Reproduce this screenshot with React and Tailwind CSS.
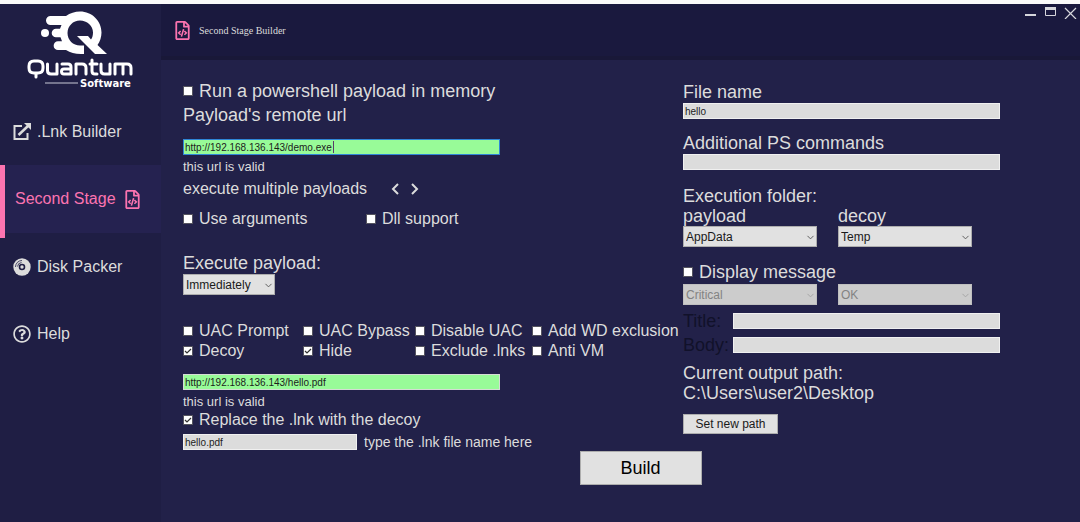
import { useState } from 'react';
import { ChevronDown } from 'lucide-react';
import { FaRegFileCode, FaRegQuestionCircle } from 'react-icons/fa';

function Logo() {
  return (
    <div className="flex flex-col items-center h-[94px] pt-[7px]">
      <svg width="110" height="80" viewBox="26 11 110 80" fill="none" className="overflow-visible">
        <g fill="#fff">
          <path
            fillRule="evenodd"
            d="M50.500 16H66C70 13 75 11.500 80 11.500C92 11.500 101.500 21 101.500 32.500C101.500 37 100 41.500 97.500 45L107 54H95L77 36H88L91 39.500C92.500 37.500 93 35 93 32.500C93 25.500 87 20.500 80 20.500C73 20.500 67.500 26 67.500 33C67.500 40 73 45.500 80 45.500H84V54C76 54.500 71 53 66 50H58A4.300 4.300 0 0 1 58 41.300H62L60.500 37.300H56A4.300 4.300 0 0 1 56 28.700H60L61.500 25H50.500A4.500 4.500 0 0 1 50.500 16Z"
          />
          <circle cx="45" cy="33" r="4" />
        </g>
        <g stroke="#fff" strokeWidth="3" strokeLinecap="round" strokeLinejoin="round">
          <path d="M34 61H38Q43 61 43 66V68Q43 73 38 73H34Q29 73 29 68V66Q29 61 34 61ZM36 73V77" />
          <path d="M47.500 64V70.500Q47.500 74 51 74H57V64" />
          <path d="M62 64H68Q71 64 71 67V74H64Q61.500 74 61.500 71.500Q61.500 69 64 69H71" />
          <path d="M76 74V64H82Q86 64 86 68V74" />
          <path d="M92 60V71Q92 74 95 74H97M90 64H97" />
          <path d="M101 64V70.500Q101 74 104.500 74H110V64" />
          <path d="M115 74V64H127Q131 64 131 68V74M123 64V74" />
        </g>
        <path d="M45 83H78" stroke="#c9c9d6" />
        <text x="80" y="87" fill="#fff" fontFamily="DejaVu Sans" fontWeight="700" fontSize="10">
          Software
        </text>
      </svg>
    </div>
  );
}

function LinkIcon() {
  return (
    <svg width="18" height="18" viewBox="0 0 18 18" fill="none" stroke="#dcdcdc" strokeWidth="2">
      <path d="M9 3H1.500V16H14.500V10" />
      <path d="M5.500 12L15 3" strokeWidth="2.500" />
      <path d="M11 0H18V7Z" fill="#dcdcdc" stroke="none" />
    </svg>
  );
}

function DiskIcon() {
  return (
    <svg width="18" height="18" viewBox="0 0 18 18" fill="none">
      <circle cx="9" cy="9" r="8.700" fill="#dcdcdc" />
      <circle cx="9" cy="9" r="2.500" stroke="#1f1e44" strokeWidth="1.600" />
      <path d="M2.500 9A6.500 6.500 0 0 1 9 2.500M4.500 8.500A4.500 4.500 0 0 1 8.500 4.500" stroke="#1f1e44" strokeWidth="0.800" />
    </svg>
  );
}

function NavItem({ icon, children }) {
  return (
    <button type="button" className="flex items-center gap-[6px] h-[67px] w-full pl-[13px] text-base text-[#dcdcdc]">
      {icon}
      {children}
    </button>
  );
}

function Checkbox({ label, checked = false, large = false }) {
  const [on, setOn] = useState(checked);
  return (
    <label
      className={
        large
          ? 'flex items-center gap-[6px] text-lg leading-[22px] whitespace-nowrap'
          : 'flex items-center gap-[6px] text-base leading-5 whitespace-nowrap'
      }
    >
      <span className="relative flex shrink-0">
        <input
          type="checkbox"
          checked={on}
          onChange={() => setOn(!on)}
          className="peer appearance-none size-[10px] bg-white border border-[#55545f]"
        />
        <svg
          viewBox="0 0 10 10"
          fill="none"
          stroke="#333"
          strokeWidth="1.200"
          className="absolute inset-0 size-[10px] hidden peer-checked:block pointer-events-none"
        >
          <path d="M2 5L4 7L8 3" />
        </svg>
      </span>
      {label}
    </label>
  );
}

function TextInput({ className = '', ...props }) {
  return (
    <input
      type="text"
      className={`block h-4 px-px text-[10px] leading-3 text-[#1c1c1c] border outline-none ${className}`}
      {...props}
    />
  );
}

function Select({ id, label, options, disabled, className = '' }) {
  return (
    <div className={`relative ${className}`}>
      <select
        id={id}
        aria-label={label}
        disabled={disabled}
        className="appearance-none block w-full h-[21px] pl-[2px] pr-4 text-xs leading-4 text-[#1a1a1a] bg-[#e1e1e1] border border-[#adadad] disabled:bg-[#cccccc] disabled:border-[#bfbfbf] disabled:text-[#838383] disabled:opacity-100"
      >
        {options.map((o) => (
          <option key={o}>{o}</option>
        ))}
      </select>
      <ChevronDown
        size={11}
        strokeWidth={2}
        className={`absolute right-[1px] top-[6px] pointer-events-none ${disabled ? 'text-[#a3a3a3]' : 'text-[#555555]'}`}
      />
    </div>
  );
}

function WindowControls() {
  return (
    <div className="flex items-start gap-[7px] pt-[2px] pr-[3px] text-[#d6d6dc]">
      <button type="button" aria-label="Minimize" className="size-[13px]">
        <svg width="13" height="13" viewBox="0 0 13 13" stroke="currentColor" strokeWidth="2">
          <path d="M1 9H12" />
        </svg>
      </button>
      <button type="button" aria-label="Maximize" className="size-[13px]">
        <svg width="13" height="13" viewBox="0 0 13 13" fill="none" stroke="currentColor">
          <path d="M1.500 1V9.500H11.500V1" />
          <path d="M1 2.500H12" strokeWidth="3" />
        </svg>
      </button>
      <button type="button" aria-label="Close" className="size-[13px]">
        <svg width="13" height="13" viewBox="0 0 13 13" stroke="currentColor" strokeWidth="1.200">
          <path d="M1 2L12 13M12 2L1 13" />
        </svg>
      </button>
    </div>
  );
}

function PayloadColumn() {
  const [url, setUrl] = useState('http://192.168.136.143/demo.exe');
  const [decoyUrl, setDecoyUrl] = useState('http://192.168.136.143/hello.pdf');
  const [lnkName, setLnkName] = useState('hello.pdf');

  return (
    <section>
      <Checkbox large label="Run a powershell payload in memory" />
      <label htmlFor="url" className="block mt-[2px] text-lg leading-[22px]">
        Payload's remote url
      </label>
      <div className="relative mt-[13px]">
        <TextInput
          id="url"
          value={url}
          onChange={(e) => setUrl(e.target.value)}
          className="w-[317px] max-w-full bg-[#98fb98] border-[#2f86d6]"
        />
        {/* text cursor */}
        <span className="absolute left-[150px] top-[2px] w-px h-3 bg-[#5a3a6a] pointer-events-none" />
      </div>
      <p className="mt-1 text-[13px] leading-4">this url is valid</p>

      <div className="flex items-center mt-1 text-base leading-5">
        execute multiple payloads
        <button type="button" aria-label="Previous payload" className="ml-6">
          <svg width="10" height="12" viewBox="0 0 10 12" fill="none" stroke="currentColor" strokeWidth="2">
            <path d="M7 1L2 6L7 11" />
          </svg>
        </button>
        <button type="button" aria-label="Next payload" className="ml-[10px]">
          <svg width="10" height="12" viewBox="0 0 10 12" fill="none" stroke="currentColor" strokeWidth="2">
            <path d="M1 1L6 6L1 11" />
          </svg>
        </button>
      </div>

      <div className="grid grid-cols-[183px_auto] mt-[10px]">
        <Checkbox label="Use arguments" />
        <Checkbox label="Dll support" />
      </div>

      <label htmlFor="when" className="block mt-[23px] text-lg leading-[22px]">
        Execute payload:
      </label>
      <Select id="when" options={['Immediately', 'After reboot']} className="w-[92px]" />

      <div className="grid grid-cols-[120px_112px_117px_auto] mt-[26px]">
        <Checkbox label="UAC Prompt" />
        <Checkbox label="UAC Bypass" />
        <Checkbox label="Disable UAC" />
        <Checkbox label="Add WD exclusion" />
        <Checkbox label="Decoy" checked />
        <Checkbox label="Hide" checked />
        <Checkbox label="Exclude .lnks" />
        <Checkbox label="Anti VM" />
      </div>

      <TextInput
        aria-label="Decoy url"
        value={decoyUrl}
        onChange={(e) => setDecoyUrl(e.target.value)}
        className="mt-[13px] w-[317px] max-w-full bg-[#98fb98] border-[#d5dcd5]"
      />
      <p className="mt-1 text-[13px] leading-4">this url is valid</p>
      <Checkbox label="Replace the .lnk with the decoy" checked />
      <div className="flex items-center gap-[7px] h-4 mt-1">
        <TextInput
          id="lnk"
          value={lnkName}
          onChange={(e) => setLnkName(e.target.value)}
          className="w-[174px] bg-[#dcdcdc] border-[#f0f0f0]"
        />
        <label htmlFor="lnk" className="text-sm">
          type the .lnk file name here
        </label>
      </div>
    </section>
  );
}

function OutputColumn() {
  return (
    <section className="pt-px pr-5">
      <div className="max-w-[317px]">
        <label htmlFor="file" className="block text-lg leading-[22px]">
          File name
        </label>
        <TextInput id="file" defaultValue="hello" className="w-full bg-[#dcdcdc] border-[#f0f0f0]" />

        <label htmlFor="commands" className="block mt-[13px] text-lg leading-[22px]">
          Additional PS commands
        </label>
        <TextInput id="commands" className="w-full bg-[#dcdcdc] border-[#f0f0f0]" />

        <p className="mt-4 text-lg leading-5">Execution folder:</p>
        <div className="grid grid-cols-[134px_134px] gap-x-[21px]">
          <label htmlFor="payload-dir" className="text-lg leading-5">
            payload
          </label>
          <label htmlFor="decoy-dir" className="text-lg leading-5">
            decoy
          </label>
          <Select id="payload-dir" options={['AppData', 'Temp']} />
          <Select id="decoy-dir" options={['Temp', 'AppData']} />
        </div>

        <div className="mt-[14px]">
          <Checkbox large label="Display message" />
        </div>
        <div className="grid grid-cols-[134px_134px] gap-x-[21px] mt-px">
          <Select label="Message icon" options={['Critical']} disabled />
          <Select label="Message buttons" options={['OK']} disabled />
        </div>

        <div className="grid grid-cols-[50px_1fr] gap-y-2 mt-2 text-lg leading-4">
          <label htmlFor="title" className="text-[#11112a]">
            Title:
          </label>
          <TextInput id="title" className="bg-[#dcdcdc] border-[#f0f0f0]" />
          <label htmlFor="body" className="text-[#11112a]">
            Body:
          </label>
          <TextInput id="body" className="bg-[#dcdcdc] border-[#f0f0f0]" />
        </div>

        <p className="mt-[10px] text-lg leading-5">
          Current output path:
          <br />
          C:\Users\user2\Desktop
        </p>
        <button
          type="button"
          className="block w-[95px] h-5 mt-[11px] bg-[#e1e1e1] border border-[#adadad] text-xs text-[#1a1a1a]"
        >
          Set new path
        </button>
      </div>
    </section>
  );
}

export default function App() {
  return (
    <div className="min-h-screen flex flex-col bg-[#222149] border-t-4 border-[#fafafa] font-['Liberation_Sans',Arial,sans-serif] text-[#dcdcdc]">
      <div className="flex flex-1">
        <aside className="w-[161px] shrink-0 bg-[#1f1e44]">
          <Logo />
          <nav>
            <NavItem icon={<LinkIcon />}>.Lnk Builder</NavItem>
            <div className="relative">
              <button
                type="button"
                className="flex items-center w-full h-[68px] pl-[15px] gap-[7px] bg-[#252250] text-base text-[#fc74b0]"
              >
                Second Stage
                <FaRegFileCode size={19} />
              </button>
              <span className="absolute left-0 top-0 w-[5px] h-[73px] bg-[#fc74b0]" />
            </div>
            <NavItem icon={<DiskIcon />}>Disk Packer</NavItem>
            <NavItem icon={<FaRegQuestionCircle size={18} />}>Help</NavItem>
          </nav>
        </aside>

        <div className="flex-1 min-w-0">
          <header className="flex justify-between h-14 bg-[#1a193e] border-b-4 border-[#191838]">
            <div className="flex items-center gap-[7px] pl-[12px] font-['Liberation_Serif',serif] text-[10px]">
              <FaRegFileCode size={19} className="text-[#fc74b0]" />
              <h1>Second Stage Builder</h1>
            </div>
            <WindowControls />
          </header>

          <main className="pt-5 pl-[22px]">
            <div className="grid grid-cols-[500fr_397fr]">
              <PayloadColumn />
              <OutputColumn />
            </div>
            <div className="flex justify-center pl-[18px] pt-px">
              <button type="button" className="w-[122px] h-[34px] bg-[#e1e1e1] border border-[#adadad] text-lg text-black">
                Build
              </button>
            </div>
          </main>
        </div>
      </div>
    </div>
  );
}
